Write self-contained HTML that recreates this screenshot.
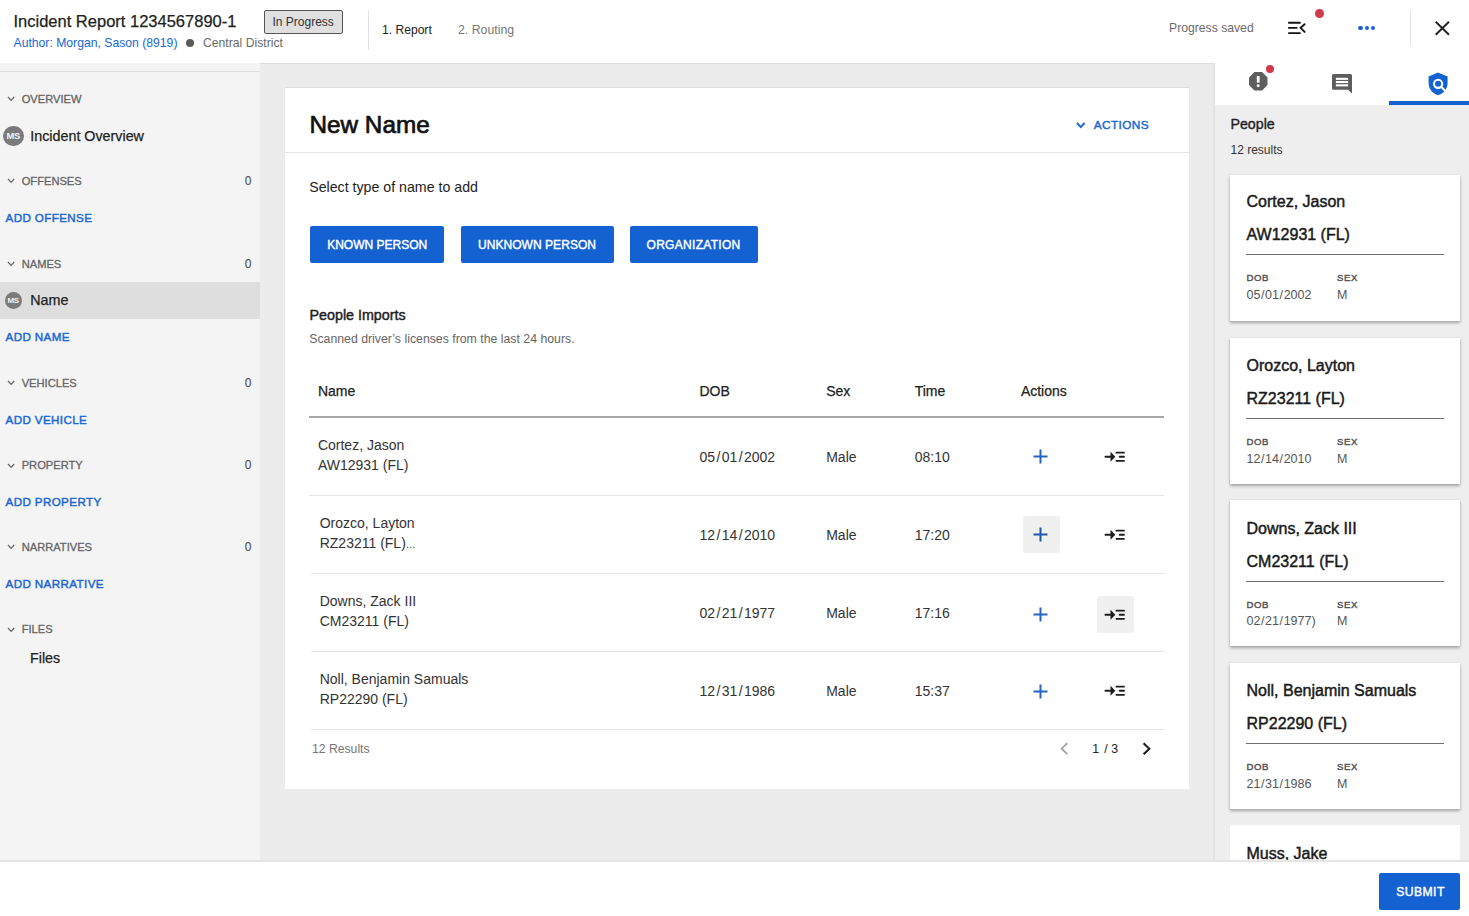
<!DOCTYPE html>
<html><head><meta charset="utf-8"><title>Incident Report</title>
<style>
html,body{margin:0;padding:0;width:1469px;height:916px;overflow:hidden;background:#fff;}
body{position:relative;font-family:"Liberation Sans",sans-serif;}
.t{position:absolute;line-height:1;white-space:nowrap;}
.r{position:absolute;}
svg{position:absolute;overflow:visible;}
</style></head><body>
<div class="r" style="left:0px;top:63px;width:260px;height:798px;background:#f4f4f4;"></div>
<div class="r" style="left:0px;top:71px;width:260px;height:1px;background:#dedede;"></div>
<div class="r" style="left:260px;top:63px;width:955px;height:798px;background:#ececec;"></div>
<div class="r" style="left:260px;top:63px;width:955px;height:1px;background:#dcdcdc;"></div>
<div class="r" style="left:1215px;top:105px;width:254px;height:756px;background:#eeeeee;"></div>
<div class="r" style="left:1213px;top:63px;width:2px;height:798px;background:#e3e3e3;"></div>
<div class="r" style="left:285px;top:88px;width:904px;height:701px;background:#ffffff;box-shadow:0 -1px 1px rgba(0,0,0,0.06);"></div>
<div class="t " style="left:13.5px;top:13.00px;font-size:16.5px;color:#222;-webkit-text-stroke:0.25px currentColor;">Incident Report 1234567890-1</div>
<div class="t " style="left:13.5px;top:37.00px;font-size:12.2px;color:#1a68d4;">Author: Morgan, Sason (8919)</div>
<div class="r" style="left:186px;top:38.7px;width:8px;height:8px;background:#5a5a5a;border-radius:50%;"></div>
<div class="t " style="left:203px;top:37.00px;font-size:12.2px;color:#6b6b6b;">Central District</div>
<div class="r" style="left:264px;top:10px;width:79px;height:24px;background:#e0e0e0;box-sizing:border-box;border:1.5px solid #555;border-radius:2px;"></div>
<div class="t " style="left:272.5px;top:16.00px;font-size:12px;color:#333;">In Progress</div>
<div class="r" style="left:368px;top:10px;width:1px;height:40px;background:#e2e2e2;"></div>
<div class="t " style="left:382px;top:24.00px;font-size:12.1px;color:#222;">1. Report</div>
<div class="t " style="left:458px;top:24.00px;font-size:12.3px;color:#777;">2. Routing</div>
<div class="t " style="left:1169px;top:22.00px;font-size:12.2px;color:#6b6b6b;">Progress saved</div>
<svg style="left:1286px;top:21px" width="22" height="14" viewBox="0 0 22 14"><g stroke="#141414" stroke-width="1.9" stroke-linecap="round" fill="none"><line x1="2.9" y1="1.8" x2="13.9" y2="1.8"/><line x1="2.9" y1="6.9" x2="10.7" y2="6.9"/><line x1="2.9" y1="12.1" x2="13.9" y2="12.1"/><polyline points="18.6,3.2 14.6,6.9 18.6,10.9" stroke-linejoin="miter"/></g></svg>
<div class="r" style="left:1315.1px;top:9px;width:8.8px;height:8.8px;background:#cf3b49;border-radius:50%;"></div>
<div class="r" style="left:1358.4px;top:25.9px;width:4.2px;height:4.2px;background:#1a62d8;border-radius:50%;"></div>
<div class="r" style="left:1364.6000000000001px;top:25.9px;width:4.2px;height:4.2px;background:#1a62d8;border-radius:50%;"></div>
<div class="r" style="left:1370.9px;top:25.9px;width:4.2px;height:4.2px;background:#1a62d8;border-radius:50%;"></div>
<div class="r" style="left:1410px;top:10px;width:1px;height:36px;background:#e2e2e2;"></div>
<svg style="left:1434.5px;top:21px" width="15" height="15" viewBox="0 0 15 15"><g stroke="#222" stroke-width="1.9"><line x1="0.7" y1="0.7" x2="14" y2="13.8"/><line x1="14" y1="0.7" x2="0.7" y2="13.8"/></g></svg>
<div class="r" style="left:1389px;top:101px;width:80px;height:4px;background:#1462d2;"></div>
<svg style="left:1248.6px;top:72px" width="19" height="19" viewBox="0 0 19 19"><polygon points="5.4,0 13.1,0 18.5,5.4 18.5,13.1 13.1,18.5 5.4,18.5 0,13.1 0,5.4" fill="#5e5e5e"/><rect x="7.8" y="4" width="2.8" height="6.6" fill="#fff"/><circle cx="9.2" cy="13.8" r="1.45" fill="#fff"/></svg>
<div class="r" style="left:1265.7px;top:64.7px;width:8.6px;height:8.6px;background:#d13a4a;border-radius:50%;"></div>
<svg style="left:1332px;top:74.2px" width="21" height="20" viewBox="0 0 21 20"><path d="M1.5,0 H18.5 Q20,0 20,1.5 V19.6 L16,15.8 H1.5 Q0,15.8 0,14.3 V1.5 Q0,0 1.5,0 Z" fill="#5e5e5e"/><rect x="3.9" y="3.8" width="12.2" height="2.1" fill="#fff"/><rect x="3.9" y="7.0" width="12.2" height="2.1" fill="#fff"/><rect x="3.9" y="10.3" width="12.2" height="2.1" fill="#fff"/></svg>
<svg style="left:1427.5px;top:71.5px" width="20" height="24" viewBox="0 0 20 24"><path d="M10,0.4 L19.6,4.4 V11 C19.6,17 15.5,21.6 10,23.3 C4.5,21.6 0.6,17 0.6,11 V4.4 Z" fill="#1462d2"/><circle cx="10.1" cy="11.8" r="4.1" fill="none" stroke="#fff" stroke-width="2.1"/><line x1="12.9" y1="14.6" x2="19" y2="20.7" stroke="#fff" stroke-width="2.1"/></svg>
<div class="t " style="left:1230.5px;top:117.00px;font-size:14.2px;color:#1e1e1e;-webkit-text-stroke:0.35px currentColor;">People</div>
<div class="t " style="left:1230.5px;top:144.00px;font-size:12px;color:#333;">12 results</div>
<div class="r" style="left:1230px;top:175px;width:230px;height:146px;background:#fff;box-shadow:0 2px 3px rgba(0,0,0,0.3), 0 0 2px rgba(0,0,0,0.08);"></div>
<div class="t " style="left:1246.5px;top:194.00px;font-size:16px;color:#1a1a1a;-webkit-text-stroke:0.45px currentColor;">Cortez, Jason</div>
<div class="t " style="left:1246.5px;top:227.00px;font-size:16px;color:#1a1a1a;-webkit-text-stroke:0.45px currentColor;">AW12931 (FL)</div>
<div class="r" style="left:1246px;top:254px;width:198px;height:1px;background:#6e6e6e;"></div>
<div class="t " style="left:1246.5px;top:273.00px;font-size:9.6px;color:#505050;letter-spacing:0.6px;-webkit-text-stroke:0.4px currentColor;">DOB</div>
<div class="t " style="left:1337px;top:273.00px;font-size:9.6px;color:#505050;letter-spacing:0.6px;-webkit-text-stroke:0.4px currentColor;">SEX</div>
<div class="t " style="left:1246.5px;top:289.00px;font-size:12.5px;color:#555;">05<span style="margin:0 0.6px">/</span>01<span style="margin:0 0.6px">/</span>2002</div>
<div class="t " style="left:1337px;top:289.00px;font-size:12.5px;color:#555;">M</div>
<div class="r" style="left:1230px;top:337.5px;width:230px;height:146px;background:#fff;box-shadow:0 2px 3px rgba(0,0,0,0.3), 0 0 2px rgba(0,0,0,0.08);"></div>
<div class="t " style="left:1246.5px;top:358.00px;font-size:16px;color:#1a1a1a;-webkit-text-stroke:0.45px currentColor;">Orozco, Layton</div>
<div class="t " style="left:1246.5px;top:391.00px;font-size:16px;color:#1a1a1a;-webkit-text-stroke:0.45px currentColor;">RZ23211 (FL)</div>
<div class="r" style="left:1246px;top:418px;width:198px;height:1px;background:#6e6e6e;"></div>
<div class="t " style="left:1246.5px;top:437.00px;font-size:9.6px;color:#505050;letter-spacing:0.6px;-webkit-text-stroke:0.4px currentColor;">DOB</div>
<div class="t " style="left:1337px;top:437.00px;font-size:9.6px;color:#505050;letter-spacing:0.6px;-webkit-text-stroke:0.4px currentColor;">SEX</div>
<div class="t " style="left:1246.5px;top:453.00px;font-size:12.5px;color:#555;">12<span style="margin:0 0.6px">/</span>14<span style="margin:0 0.6px">/</span>2010</div>
<div class="t " style="left:1337px;top:453.00px;font-size:12.5px;color:#555;">M</div>
<div class="r" style="left:1230px;top:500px;width:230px;height:146px;background:#fff;box-shadow:0 2px 3px rgba(0,0,0,0.3), 0 0 2px rgba(0,0,0,0.08);"></div>
<div class="t " style="left:1246.5px;top:521.00px;font-size:16px;color:#1a1a1a;-webkit-text-stroke:0.45px currentColor;">Downs, Zack III</div>
<div class="t " style="left:1246.5px;top:554.00px;font-size:16px;color:#1a1a1a;-webkit-text-stroke:0.45px currentColor;">CM23211 (FL)</div>
<div class="r" style="left:1246px;top:581px;width:198px;height:1px;background:#6e6e6e;"></div>
<div class="t " style="left:1246.5px;top:600.00px;font-size:9.6px;color:#505050;letter-spacing:0.6px;-webkit-text-stroke:0.4px currentColor;">DOB</div>
<div class="t " style="left:1337px;top:600.00px;font-size:9.6px;color:#505050;letter-spacing:0.6px;-webkit-text-stroke:0.4px currentColor;">SEX</div>
<div class="t " style="left:1246.5px;top:615.00px;font-size:12.5px;color:#555;">02<span style="margin:0 0.6px">/</span>21<span style="margin:0 0.6px">/</span>1977)</div>
<div class="t " style="left:1337px;top:615.00px;font-size:12.5px;color:#555;">M</div>
<div class="r" style="left:1230px;top:662.5px;width:230px;height:146px;background:#fff;box-shadow:0 2px 3px rgba(0,0,0,0.3), 0 0 2px rgba(0,0,0,0.08);"></div>
<div class="t " style="left:1246.5px;top:683.00px;font-size:16px;color:#1a1a1a;-webkit-text-stroke:0.45px currentColor;">Noll, Benjamin Samuals</div>
<div class="t " style="left:1246.5px;top:716.00px;font-size:16px;color:#1a1a1a;-webkit-text-stroke:0.45px currentColor;">RP22290 (FL)</div>
<div class="r" style="left:1246px;top:743px;width:198px;height:1px;background:#6e6e6e;"></div>
<div class="t " style="left:1246.5px;top:762.00px;font-size:9.6px;color:#505050;letter-spacing:0.6px;-webkit-text-stroke:0.4px currentColor;">DOB</div>
<div class="t " style="left:1337px;top:762.00px;font-size:9.6px;color:#505050;letter-spacing:0.6px;-webkit-text-stroke:0.4px currentColor;">SEX</div>
<div class="t " style="left:1246.5px;top:778.00px;font-size:12.5px;color:#555;">21<span style="margin:0 0.6px">/</span>31<span style="margin:0 0.6px">/</span>1986</div>
<div class="t " style="left:1337px;top:778.00px;font-size:12.5px;color:#555;">M</div>
<div class="r" style="left:1230px;top:825px;width:230px;height:36px;background:#fff;"></div>
<div class="t " style="left:1246.5px;top:846.00px;font-size:16px;color:#1a1a1a;-webkit-text-stroke:0.45px currentColor;">Muss, Jake</div>
<svg style="left:6.9px;top:96.2px" width="8.2" height="5.5" viewBox="0 0 8.2 5.5"><polyline points="1,1 4.1,4.5 7.2,1" fill="none" stroke="#666" stroke-width="1.15"/></svg>
<div class="t " style="left:21.7px;top:94.00px;font-size:11.15px;color:#666;-webkit-text-stroke:0.3px currentColor;">OVERVIEW</div>
<div class="r" style="left:3.0500000000000007px;top:125.65px;width:20.5px;height:20.5px;border-radius:50%;background:#7a7a7a;color:#f4f4f4;font-size:9.4px;font-weight:bold;line-height:20.5px;text-align:center;letter-spacing:-0.2px;">MS</div>
<div class="t " style="left:30.3px;top:129.00px;font-size:14.3px;color:#222;-webkit-text-stroke:0.25px currentColor;">Incident Overview</div>
<svg style="left:6.9px;top:178.2px" width="8.2" height="5.5" viewBox="0 0 8.2 5.5"><polyline points="1,1 4.1,4.5 7.2,1" fill="none" stroke="#666" stroke-width="1.15"/></svg>
<div class="t " style="left:21.7px;top:176.00px;font-size:11.15px;color:#666;-webkit-text-stroke:0.3px currentColor;">OFFENSES</div>
<div class="t" style="right:1217.5px;top:175.00px;font-size:12px;color:#555;-webkit-text-stroke:0.15px currentColor;">0</div>
<div class="t " style="left:5.5px;top:212.00px;font-size:11.6px;color:#1a68d4;letter-spacing:0.4px;-webkit-text-stroke:0.45px currentColor;">ADD OFFENSE</div>
<svg style="left:6.9px;top:260.7px" width="8.2" height="5.5" viewBox="0 0 8.2 5.5"><polyline points="1,1 4.1,4.5 7.2,1" fill="none" stroke="#666" stroke-width="1.15"/></svg>
<div class="t " style="left:21.7px;top:259.00px;font-size:11.15px;color:#666;-webkit-text-stroke:0.3px currentColor;">NAMES</div>
<div class="t" style="right:1217.5px;top:258.00px;font-size:12px;color:#555;-webkit-text-stroke:0.15px currentColor;">0</div>
<div class="r" style="left:0px;top:282px;width:260px;height:37px;background:#dedede;"></div>
<div class="r" style="left:4.699999999999999px;top:291.7px;width:17px;height:17px;border-radius:50%;background:#7a7a7a;color:#f4f4f4;font-size:8px;font-weight:bold;line-height:17px;text-align:center;letter-spacing:-0.2px;">MS</div>
<div class="t " style="left:30.3px;top:293.00px;font-size:14.3px;color:#222;-webkit-text-stroke:0.25px currentColor;">Name</div>
<div class="t " style="left:5.5px;top:331.00px;font-size:11.6px;color:#1a68d4;letter-spacing:0.4px;-webkit-text-stroke:0.45px currentColor;">ADD NAME</div>
<svg style="left:6.9px;top:380.2px" width="8.2" height="5.5" viewBox="0 0 8.2 5.5"><polyline points="1,1 4.1,4.5 7.2,1" fill="none" stroke="#666" stroke-width="1.15"/></svg>
<div class="t " style="left:21.7px;top:378.00px;font-size:11.15px;color:#666;-webkit-text-stroke:0.3px currentColor;">VEHICLES</div>
<div class="t" style="right:1217.5px;top:377.00px;font-size:12px;color:#555;-webkit-text-stroke:0.15px currentColor;">0</div>
<div class="t " style="left:5.5px;top:414.00px;font-size:11.6px;color:#1a68d4;letter-spacing:0.4px;-webkit-text-stroke:0.45px currentColor;">ADD VEHICLE</div>
<svg style="left:6.9px;top:462.59999999999997px" width="8.2" height="5.5" viewBox="0 0 8.2 5.5"><polyline points="1,1 4.1,4.5 7.2,1" fill="none" stroke="#666" stroke-width="1.15"/></svg>
<div class="t " style="left:21.7px;top:460.00px;font-size:11.15px;color:#666;-webkit-text-stroke:0.3px currentColor;">PROPERTY</div>
<div class="t" style="right:1217.5px;top:459.00px;font-size:12px;color:#555;-webkit-text-stroke:0.15px currentColor;">0</div>
<div class="t " style="left:5.5px;top:496.00px;font-size:11.6px;color:#1a68d4;letter-spacing:0.4px;-webkit-text-stroke:0.45px currentColor;">ADD PROPERTY</div>
<svg style="left:6.9px;top:544.2px" width="8.2" height="5.5" viewBox="0 0 8.2 5.5"><polyline points="1,1 4.1,4.5 7.2,1" fill="none" stroke="#666" stroke-width="1.15"/></svg>
<div class="t " style="left:21.7px;top:542.00px;font-size:11.15px;color:#666;-webkit-text-stroke:0.3px currentColor;">NARRATIVES</div>
<div class="t" style="right:1217.5px;top:541.00px;font-size:12px;color:#555;-webkit-text-stroke:0.15px currentColor;">0</div>
<div class="t " style="left:5.5px;top:578.00px;font-size:11.6px;color:#1a68d4;letter-spacing:0.4px;-webkit-text-stroke:0.45px currentColor;">ADD NARRATIVE</div>
<svg style="left:6.9px;top:626.6px" width="8.2" height="5.5" viewBox="0 0 8.2 5.5"><polyline points="1,1 4.1,4.5 7.2,1" fill="none" stroke="#666" stroke-width="1.15"/></svg>
<div class="t " style="left:21.7px;top:624.00px;font-size:11.15px;color:#666;-webkit-text-stroke:0.3px currentColor;">FILES</div>
<div class="t " style="left:30px;top:651.00px;font-size:14.3px;color:#222;-webkit-text-stroke:0.25px currentColor;">Files</div>
<div class="t " style="left:309.5px;top:113.00px;font-size:24.3px;color:#111;-webkit-text-stroke:0.7px currentColor;">New Name</div>
<svg style="left:1076.2px;top:122px" width="9.6" height="6.2" viewBox="0 0 9.6 6.2"><polyline points="1,1 4.8,5.2 8.6,1" fill="none" stroke="#1a68d4" stroke-width="1.9"/></svg>
<div class="t " style="left:1093.7px;top:120.00px;font-size:11.8px;color:#1a68d4;letter-spacing:0.4px;-webkit-text-stroke:0.45px currentColor;">ACTIONS</div>
<div class="r" style="left:285px;top:152px;width:904px;height:1px;background:#e3e3e3;"></div>
<div class="t " style="left:309.2px;top:180.00px;font-size:14.2px;color:#222;">Select type of name to add</div>
<div class="r" style="left:310px;top:226px;width:134px;height:37px;background:#1462d2;border-radius:2px;"></div>
<div class="t " style="left:327.2px;top:239.00px;font-size:12px;color:#fff;letter-spacing:0px;-webkit-text-stroke:0.4px currentColor;">KNOWN PERSON</div>
<div class="r" style="left:461px;top:226px;width:153px;height:37px;background:#1462d2;border-radius:2px;"></div>
<div class="t " style="left:478px;top:239.00px;font-size:12px;color:#fff;letter-spacing:0.05px;-webkit-text-stroke:0.4px currentColor;">UNKNOWN PERSON</div>
<div class="r" style="left:630px;top:226px;width:128px;height:37px;background:#1462d2;border-radius:2px;"></div>
<div class="t " style="left:646.5px;top:239.00px;font-size:12px;color:#fff;letter-spacing:0.3px;-webkit-text-stroke:0.4px currentColor;">ORGANIZATION</div>
<div class="t " style="left:309.5px;top:308.00px;font-size:14.3px;color:#1e1e1e;-webkit-text-stroke:0.45px currentColor;">People Imports</div>
<div class="t " style="left:309.2px;top:333.00px;font-size:12.3px;color:#666;">Scanned driver’s licenses from the last 24 hours.</div>
<div class="t " style="left:317.9px;top:384.00px;font-size:14px;color:#222;-webkit-text-stroke:0.25px currentColor;">Name</div>
<div class="t " style="left:699.5px;top:384.00px;font-size:14px;color:#222;-webkit-text-stroke:0.25px currentColor;">DOB</div>
<div class="t " style="left:826.2px;top:384.00px;font-size:14px;color:#222;-webkit-text-stroke:0.25px currentColor;">Sex</div>
<div class="t " style="left:914.7px;top:384.00px;font-size:14px;color:#222;-webkit-text-stroke:0.25px currentColor;">Time</div>
<div class="t " style="left:1020.9px;top:384.00px;font-size:14px;color:#222;-webkit-text-stroke:0.25px currentColor;">Actions</div>
<div class="r" style="left:309px;top:416px;width:855px;height:2px;background:#a6a6a6;"></div>
<div class="t " style="left:317.9px;top:438.00px;font-size:14px;color:#333;">Cortez, Jason</div>
<div class="t " style="left:317.9px;top:458.00px;font-size:14px;color:#333;">AW12931 (FL)</div>
<div class="t " style="left:699.5px;top:450.00px;font-size:14px;color:#333;">05<span style="margin:0 1.4px">/</span>01<span style="margin:0 1.4px">/</span>2002</div>
<div class="t " style="left:826.2px;top:450.00px;font-size:14px;color:#333;">Male</div>
<div class="t " style="left:914.7px;top:450.00px;font-size:14px;color:#333;">08:10</div>
<div class="r" style="left:309px;top:495px;width:855px;height:1px;background:#e4e4e4;"></div>
<svg style="left:1033px;top:449.1px" width="15" height="15" viewBox="0 0 15 15"><g stroke="#2563c4" stroke-width="2"><line x1="7.5" y1="0.5" x2="7.5" y2="14.5"/><line x1="0.5" y1="7.5" x2="14.5" y2="7.5"/></g></svg>
<svg style="left:1103.8px;top:449.85px" width="22" height="14" viewBox="0 0 22 14"><g stroke="#1e1e1e" stroke-width="1.8" stroke-linecap="round"><line x1="1.4" y1="6.75" x2="7" y2="6.75"/><line x1="12.4" y1="2.65" x2="20" y2="2.65"/><line x1="15.7" y1="6.75" x2="20" y2="6.75"/><line x1="12.4" y1="10.85" x2="20" y2="10.85"/></g><polygon points="6.5,1.8 11.3,6.75 6.5,11.7" fill="#1e1e1e"/></svg>
<div class="t " style="left:319.7px;top:516.00px;font-size:14px;color:#333;">Orozco, Layton</div>
<div class="t " style="left:319.7px;top:536.00px;font-size:14px;color:#333;">RZ23211 (FL)<span style='font-size:10px;letter-spacing:-0.3px'>…</span></div>
<div class="t " style="left:699.5px;top:528.00px;font-size:14px;color:#333;">12<span style="margin:0 1.4px">/</span>14<span style="margin:0 1.4px">/</span>2010</div>
<div class="t " style="left:826.2px;top:528.00px;font-size:14px;color:#333;">Male</div>
<div class="t " style="left:914.7px;top:528.00px;font-size:14px;color:#333;">17:20</div>
<div class="r" style="left:311px;top:573px;width:853px;height:1px;background:#e4e4e4;"></div>
<div class="r" style="left:1022.5px;top:516px;width:37px;height:37px;background:#f0f0f0;border-radius:3px;"></div>
<svg style="left:1033px;top:527.0px" width="15" height="15" viewBox="0 0 15 15"><g stroke="#1c56ae" stroke-width="2"><line x1="7.5" y1="0.5" x2="7.5" y2="14.5"/><line x1="0.5" y1="7.5" x2="14.5" y2="7.5"/></g></svg>
<svg style="left:1103.8px;top:527.75px" width="22" height="14" viewBox="0 0 22 14"><g stroke="#1e1e1e" stroke-width="1.8" stroke-linecap="round"><line x1="1.4" y1="6.75" x2="7" y2="6.75"/><line x1="12.4" y1="2.65" x2="20" y2="2.65"/><line x1="15.7" y1="6.75" x2="20" y2="6.75"/><line x1="12.4" y1="10.85" x2="20" y2="10.85"/></g><polygon points="6.5,1.8 11.3,6.75 6.5,11.7" fill="#1e1e1e"/></svg>
<div class="t " style="left:319.7px;top:594.00px;font-size:14px;color:#333;">Downs, Zack III</div>
<div class="t " style="left:319.7px;top:614.00px;font-size:14px;color:#333;">CM23211 (FL)</div>
<div class="t " style="left:699.5px;top:606.00px;font-size:14px;color:#333;">02<span style="margin:0 1.4px">/</span>21<span style="margin:0 1.4px">/</span>1977</div>
<div class="t " style="left:826.2px;top:606.00px;font-size:14px;color:#333;">Male</div>
<div class="t " style="left:914.7px;top:606.00px;font-size:14px;color:#333;">17:16</div>
<div class="r" style="left:311px;top:651px;width:853px;height:1px;background:#e4e4e4;"></div>
<div class="r" style="left:1096.5px;top:596.3px;width:37px;height:36.7px;background:#f0f0f0;border-radius:3px;"></div>
<svg style="left:1033px;top:607.3px" width="15" height="15" viewBox="0 0 15 15"><g stroke="#2563c4" stroke-width="2"><line x1="7.5" y1="0.5" x2="7.5" y2="14.5"/><line x1="0.5" y1="7.5" x2="14.5" y2="7.5"/></g></svg>
<svg style="left:1103.8px;top:608.05px" width="22" height="14" viewBox="0 0 22 14"><g stroke="#1e1e1e" stroke-width="1.8" stroke-linecap="round"><line x1="1.4" y1="6.75" x2="7" y2="6.75"/><line x1="12.4" y1="2.65" x2="20" y2="2.65"/><line x1="15.7" y1="6.75" x2="20" y2="6.75"/><line x1="12.4" y1="10.85" x2="20" y2="10.85"/></g><polygon points="6.5,1.8 11.3,6.75 6.5,11.7" fill="#1e1e1e"/></svg>
<div class="t " style="left:319.7px;top:672.00px;font-size:14px;color:#333;">Noll, Benjamin Samuals</div>
<div class="t " style="left:319.7px;top:692.00px;font-size:14px;color:#333;">RP22290 (FL)</div>
<div class="t " style="left:699.5px;top:684.00px;font-size:14px;color:#333;">12<span style="margin:0 1.4px">/</span>31<span style="margin:0 1.4px">/</span>1986</div>
<div class="t " style="left:826.2px;top:684.00px;font-size:14px;color:#333;">Male</div>
<div class="t " style="left:914.7px;top:684.00px;font-size:14px;color:#333;">15:37</div>
<div class="r" style="left:311px;top:729px;width:853px;height:1px;background:#e4e4e4;"></div>
<svg style="left:1033px;top:683.5px" width="15" height="15" viewBox="0 0 15 15"><g stroke="#2563c4" stroke-width="2"><line x1="7.5" y1="0.5" x2="7.5" y2="14.5"/><line x1="0.5" y1="7.5" x2="14.5" y2="7.5"/></g></svg>
<svg style="left:1103.8px;top:684.25px" width="22" height="14" viewBox="0 0 22 14"><g stroke="#1e1e1e" stroke-width="1.8" stroke-linecap="round"><line x1="1.4" y1="6.75" x2="7" y2="6.75"/><line x1="12.4" y1="2.65" x2="20" y2="2.65"/><line x1="15.7" y1="6.75" x2="20" y2="6.75"/><line x1="12.4" y1="10.85" x2="20" y2="10.85"/></g><polygon points="6.5,1.8 11.3,6.75 6.5,11.7" fill="#1e1e1e"/></svg>
<div class="t " style="left:312px;top:743.00px;font-size:12.2px;color:#757575;">12 Results</div>
<svg style="left:1060px;top:742px" width="9" height="13" viewBox="0 0 9 13"><polyline points="7.3,1.2 1.6,6.7 7.3,12.2" fill="none" stroke="#9e9e9e" stroke-width="1.7"/></svg>
<div class="t " style="left:1092.3px;top:743.00px;font-size:12.3px;color:#222;">1<span style='margin:0 3.6px 0 5px'>/</span>3</div>
<svg style="left:1141.5px;top:742px" width="9" height="13" viewBox="0 0 9 13"><polyline points="1.6,1.2 7.3,6.7 1.6,12.2" fill="none" stroke="#1e1e1e" stroke-width="2.1"/></svg>
<div class="r" style="left:0px;top:861px;width:1469px;height:55px;background:#ffffff;"></div>
<div class="r" style="left:0px;top:860px;width:1469px;height:2px;background:#e5e5e5;"></div>
<div class="r" style="left:1379px;top:873px;width:81px;height:37px;background:#1462d2;border-radius:2px;"></div>
<div class="t " style="left:1396.3px;top:886.00px;font-size:12.2px;color:#fff;letter-spacing:0.4px;-webkit-text-stroke:0.4px currentColor;">SUBMIT</div>
</body></html>
